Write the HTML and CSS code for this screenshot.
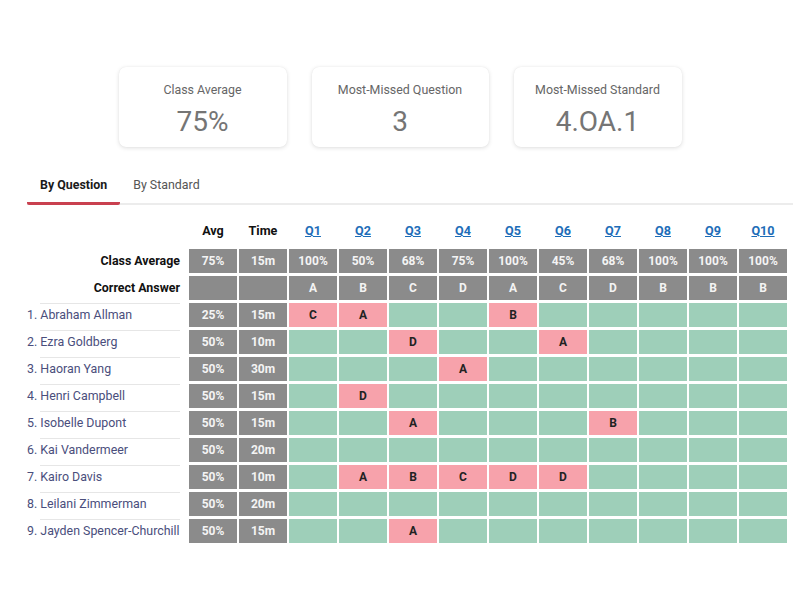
FILE: index.html
```html
<!DOCTYPE html>
<html>
<head>
<meta charset="utf-8">
<link rel="stylesheet" href="styles.css">
</head>
<body>
<div class="cards">
  <div class="card"><div class="card-title">Class Average</div><div class="card-value">75%</div></div>
  <div class="card card-wide"><div class="card-title">Most-Missed Question</div><div class="card-value">3</div></div>
  <div class="card"><div class="card-title">Most-Missed Standard</div><div class="card-value">4.OA.1</div></div>
</div>
<div class="tabs">
  <div class="tab active">By Question</div>
  <div class="tab">By Standard</div>
</div>
<div class="grid">
  <div class="hd"></div>
  <div class="hd">Avg</div><div class="hd">Time</div>
  <div class="hd q"><a>Q1</a></div><div class="hd q"><a>Q2</a></div><div class="hd q"><a>Q3</a></div><div class="hd q"><a>Q4</a></div><div class="hd q"><a>Q5</a></div><div class="hd q"><a>Q6</a></div><div class="hd q"><a>Q7</a></div><div class="hd q"><a>Q8</a></div><div class="hd q"><a>Q9</a></div><div class="hd q"><a>Q10</a></div>

  <div class="label">Class Average</div>
  <div class="c g">75%</div><div class="c g">15m</div>
  <div class="c g">100%</div><div class="c g">50%</div><div class="c g">68%</div><div class="c g">75%</div><div class="c g">100%</div><div class="c g">45%</div><div class="c g">68%</div><div class="c g">100%</div><div class="c g">100%</div><div class="c g">100%</div>

  <div class="label">Correct Answer</div>
  <div class="c g"></div><div class="c g"></div>
  <div class="c g">A</div><div class="c g">B</div><div class="c g">C</div><div class="c g">D</div><div class="c g">A</div><div class="c g">C</div><div class="c g">D</div><div class="c g">B</div><div class="c g">B</div><div class="c g">B</div>

  <div class="name"><span>1. Abraham Allman</span></div>
  <div class="c g">25%</div><div class="c g">15m</div>
  <div class="c w">C</div><div class="c w">A</div><div class="c r"></div><div class="c r"></div><div class="c w">B</div><div class="c r"></div><div class="c r"></div><div class="c r"></div><div class="c r"></div><div class="c r"></div>

  <div class="name"><span>2. Ezra Goldberg</span></div>
  <div class="c g">50%</div><div class="c g">10m</div>
  <div class="c r"></div><div class="c r"></div><div class="c w">D</div><div class="c r"></div><div class="c r"></div><div class="c w">A</div><div class="c r"></div><div class="c r"></div><div class="c r"></div><div class="c r"></div>

  <div class="name"><span>3. Haoran Yang</span></div>
  <div class="c g">50%</div><div class="c g">30m</div>
  <div class="c r"></div><div class="c r"></div><div class="c r"></div><div class="c w">A</div><div class="c r"></div><div class="c r"></div><div class="c r"></div><div class="c r"></div><div class="c r"></div><div class="c r"></div>

  <div class="name"><span>4. Henri Campbell</span></div>
  <div class="c g">50%</div><div class="c g">15m</div>
  <div class="c r"></div><div class="c w">D</div><div class="c r"></div><div class="c r"></div><div class="c r"></div><div class="c r"></div><div class="c r"></div><div class="c r"></div><div class="c r"></div><div class="c r"></div>

  <div class="name"><span>5. Isobelle Dupont</span></div>
  <div class="c g">50%</div><div class="c g">15m</div>
  <div class="c r"></div><div class="c r"></div><div class="c w">A</div><div class="c r"></div><div class="c r"></div><div class="c r"></div><div class="c w">B</div><div class="c r"></div><div class="c r"></div><div class="c r"></div>

  <div class="name"><span>6. Kai Vandermeer</span></div>
  <div class="c g">50%</div><div class="c g">20m</div>
  <div class="c r"></div><div class="c r"></div><div class="c r"></div><div class="c r"></div><div class="c r"></div><div class="c r"></div><div class="c r"></div><div class="c r"></div><div class="c r"></div><div class="c r"></div>

  <div class="name"><span>7. Kairo Davis</span></div>
  <div class="c g">50%</div><div class="c g">10m</div>
  <div class="c r"></div><div class="c w">A</div><div class="c w">B</div><div class="c w">C</div><div class="c w">D</div><div class="c w">D</div><div class="c r"></div><div class="c r"></div><div class="c r"></div><div class="c r"></div>

  <div class="name"><span>8. Leilani Zimmerman</span></div>
  <div class="c g">50%</div><div class="c g">20m</div>
  <div class="c r"></div><div class="c r"></div><div class="c r"></div><div class="c r"></div><div class="c r"></div><div class="c r"></div><div class="c r"></div><div class="c r"></div><div class="c r"></div><div class="c r"></div>

  <div class="name"><span>9. Jayden Spencer-Churchill</span></div>
  <div class="c g">50%</div><div class="c g">15m</div>
  <div class="c r"></div><div class="c r"></div><div class="c w">A</div><div class="c r"></div><div class="c r"></div><div class="c r"></div><div class="c r"></div><div class="c r"></div><div class="c r"></div><div class="c r"></div>
</div>
</body>
</html>
```
FILE: styles.css
```css
html, body {
  margin: 0;
  padding: 0;
  background: #ffffff;
  font-family: Roboto, "Liberation Sans", sans-serif;
}
.cards {
  display: flex;
  justify-content: center;
  gap: 25px;
  padding-top: 67px;
}
.card {
  width: 168px;
  height: 80px;
  box-sizing: border-box;
  border-radius: 7px;
  background: #fff;
  box-shadow: 0 1px 4px rgba(0,0,0,0.13), 0 0 1px rgba(0,0,0,0.08);
  display: flex;
  flex-direction: column;
  align-items: center;
  padding-top: 15px;
}
.card-wide { width: 177px; }
.card-title {
  font-size: 12.4px;
  color: #666;
  line-height: 16px;
}
.card-value {
  font-size: 28px;
  color: #757575;
  line-height: 34px;
  margin-top: 7px;
}
.tabs {
  display: flex;
  margin: 30px 7px 0 27px;
  border-bottom: 2px solid #ececec;
}
.tab {
  font-size: 12.4px;
  line-height: 16px;
  color: #555;
  padding: 0 13px 9px 13px;
  margin-bottom: -2px;
  border-bottom: 3px solid transparent;
}
.tab.active {
  color: #1b1b1b;
  font-weight: 700;
  border-bottom-color: #c9404f;
  border-radius: 2px;
}
.grid {
  display: grid;
  grid-template-columns: 160px repeat(12, 48px);
  column-gap: 2px;
  row-gap: 3px;
  margin: 16px 0 0 27px;
}
.hd {
  height: 25px;
  line-height: 20px;
  text-align: center;
  font-size: 12.6px;
  font-weight: 700;
  color: #111;
}
.hd.q a {
  color: #1d6db8;
  text-decoration: underline;
  font-weight: 700;
}
.label {
  height: 24px;
  line-height: 24px;
  text-align: right;
  padding-right: 7px;
  font-size: 12.4px;
  font-weight: 700;
  color: #111;
}
.name {
  height: 24px;
  padding-right: 7px;
  display: flex;
}
.name span {
  flex: 1;
  font-size: 12.4px;
  line-height: 23px;
  color: #4a4e7c;
  white-space: nowrap;
  position: relative;
}
.name span::before {
  content: "";
  position: absolute;
  left: 13px;
  right: 0;
  top: 0;
  border-top: 1px solid #e6e6e6;
}
.c {
  height: 24px;
  line-height: 24px;
  text-align: center;
  font-size: 12px;
  font-weight: 700;
}
.c.g { background: #8b8b8b; color: #f4f4f4; }
.c.r { background: #9ecfb9; }
.c.w { background: #f7a2ab; color: #222; }
```
